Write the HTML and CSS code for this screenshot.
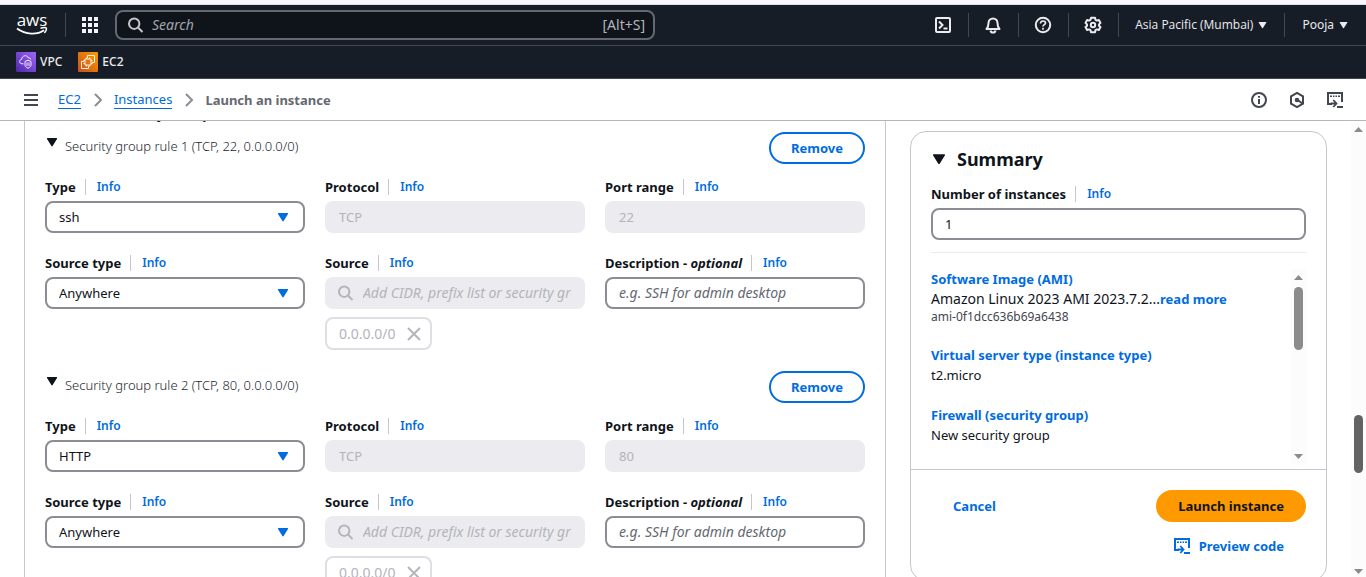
FILE: index.html
```html
<!DOCTYPE html>
<html lang="en">
<head>
<meta charset="utf-8">
<title>Launch an instance | EC2</title>
<link rel="stylesheet" href="styles.css">
</head>
<body>
<svg class="sprite" aria-hidden="true">
  <symbol id="i-search" viewBox="0 0 16 16"><circle cx="6.2" cy="6.7" r="5.2" fill="none" stroke="currentColor" stroke-width="2"/><path d="M10 10.500 14.500 15" stroke="currentColor" stroke-width="2"/></symbol>
  <symbol id="i-down" viewBox="0 0 12 10"><path d="M1.5 1h9q1 0 .5 1L6.6 9q-.6.8-1.2 0L1 2Q.5 1 1.500 1z" fill="currentColor"/></symbol>
  <symbol id="i-close" viewBox="0 0 16 16"><path d="M2 2l12 12M14 2 2 14" stroke="currentColor" stroke-width="2"/></symbol>
  <symbol id="i-chevron" viewBox="0 0 10 14"><path d="m2 1 6 6-6 6" fill="none" stroke="currentColor" stroke-width="2"/></symbol>
  <symbol id="i-code" viewBox="0 0 18 18"><path d="M6 13H2V2h14v9" fill="none" stroke="currentColor" stroke-width="2"/><path d="M4 4.500h2v1.500H4zM7 4.500h1.500v1.500H7zM9.500 4.500H11v1.500H9.500zM12 4.500h2v1.500h-2zM11 15h6v2h-6z" fill="currentColor"/><path d="M4.500 12.500h5.500M7.300 9l3.200 3.500L7.300 16" fill="none" stroke="currentColor" stroke-width="1.800"/></symbol>
  <symbol id="i-up" viewBox="0 0 9 5"><path d="M4.500 0 9 5H0z" fill="currentColor"/></symbol>
  <symbol id="i-dn" viewBox="0 0 9 5"><path d="M0 0h9L4.500 5z" fill="currentColor"/></symbol>
</svg>

<header class="topnav">
  <a class="logo" href="#" aria-label="AWS home">
    <svg width="32" height="32" viewBox="0 -5 32 32"><text class="logo-text" x="16" y="12" text-anchor="middle">aws</text><path d="M1 14.500c9 6.500 20 6.500 27 1.700" fill="none" stroke="#fff" stroke-width="1.900"/><path d="M24.500 14.300c3-.9 5-.9 5.700-.3.500.8-.2 3-1.800 5" fill="none" stroke="#fff" stroke-width="1.500"/></svg>
  </a>
  <button class="nav-btn apps" aria-label="Services">
    <svg width="18" height="18" viewBox="0 0 18 18" fill="#f3f3f7"><path d="M1 1h4v4H1zM7 1h4v4H7zM13 1h4v4h-4zM1 7h4v4H1zM7 7h4v4H7zM13 7h4v4h-4zM1 13h4v4H1zM7 13h4v4H7zM13 13h4v4h-4z"/></svg>
  </button>
  <label class="search">
    <svg width="16" height="16"><use href="#i-search"/></svg>
    <input type="search" placeholder="Search" aria-label="Search">
    <span>[Alt+S]</span>
  </label>
  <nav class="utilities">
    <button class="nav-btn" aria-label="CloudShell"><svg width="18" height="18" viewBox="0 0 18 18" fill="none" stroke="currentColor" stroke-width="2"><rect x="2" y="2" width="14" height="14" rx="1"/><path d="m5 5.500 3.500 3.500L5 12.500M9.500 12.500h4"/></svg></button>
    <button class="nav-btn" aria-label="Notifications"><svg width="18" height="18" viewBox="0 0 18 18" fill="none" stroke="currentColor" stroke-width="2"><path d="M2.500 13c2-2 2-3.500 2-6a4.500 4.500 0 0 1 9 0c0 2.500 0 4 2 6z" stroke-linejoin="round"/><path d="M6.500 14.500c.5 2.700 4.500 2.700 5 0"/></svg></button>
    <button class="nav-btn" aria-label="Support"><svg width="18" height="18" viewBox="0 0 18 18" fill="none" stroke="currentColor" stroke-width="2"><circle cx="9" cy="9" r="7.200"/><path d="M6.500 7.500c0-3.300 5-3.200 5-.5 0 1.800-2.500 1.500-2.500 3.500M9 11.700v2" stroke-width="1.700"/></svg></button>
    <button class="nav-btn" aria-label="Settings"><svg width="18" height="18" viewBox="0 0 18 18" fill="none" stroke="currentColor" stroke-width="2"><path d="M7 1.800h4l.5 2 1.400.8 2-.6 1.600 2.900-1.500 1.500v1.300l1.500 1.400-1.600 2.900-2-.6-1.400.8-.5 2H7l-.5-2-1.400-.8-2 .6-1.600-2.900L3 9.700V8.400L1.500 6.900 3.100 4l2 .6 1.400-.8z" stroke-linejoin="round"/><circle cx="9" cy="9" r="2.200"/></svg></button>
    <button class="nav-btn region">Asia Pacific (Mumbai)<svg width="9" height="8"><use href="#i-down"/></svg></button>
    <button class="nav-btn user">Pooja<svg width="9" height="8"><use href="#i-down"/></svg></button>
  </nav>
</header>

<nav class="favorites" aria-label="Favorites">
  <a href="#"><svg width="20" height="20" viewBox="0 0 20 20"><defs><linearGradient id="gv" x1="0" y1="1" x2="1" y2="0"><stop offset="0" stop-color="#4d27a8"/><stop offset="1" stop-color="#a166ff"/></linearGradient></defs><rect width="20" height="20" rx="1" fill="url(#gv)"/><path d="M7.500 11.800H6C3 11.500 2.800 8 5.600 7.400 5.700 3.500 11 2.300 12.300 5.800c1.800-.2 2.300.7 2.400 1.700M9 9.500l3-1.300 3 1.300v4c-.5 1.400-1.700 2.100-3 2.700-1.300-.6-2.500-1.300-3-2.700zM11 10.500v3.500M13 10.500v3.500" fill="none" stroke="#fff" stroke-width=".9"/></svg>VPC</a>
  <a href="#"><svg width="20" height="20" viewBox="0 0 20 20"><defs><linearGradient id="go" x1="0" y1="1" x2="1" y2="0"><stop offset="0" stop-color="#c8511b"/><stop offset="1" stop-color="#ff9900"/></linearGradient></defs><rect width="20" height="20" rx="1" fill="url(#go)"/><path d="M6 9.500H3.500v7h7V14M9.500 6V3.500h7v7H14M7 7h6v6H7zM8.500 5.500V7M11.500 5.500V7M8.500 13v1.500M11.500 13v1.500M5.500 8.500H7M5.500 11.500H7M13 8.500h1.500M13 11.500h1.500" fill="none" stroke="#fff" stroke-width=".9"/></svg>EC2</a>
</nav>

<div class="crumbbar">
  <button class="icon-btn" aria-label="Open navigation"><svg width="16" height="14" viewBox="0 0 16 14"><path d="M1 2h14M1 7h14M1 12h14" stroke="currentColor" stroke-width="2"/></svg></button>
  <nav class="crumbs" aria-label="Breadcrumbs">
    <a href="#">EC2</a><svg width="10" height="14"><use href="#i-chevron"/></svg><a href="#">Instances</a><svg width="10" height="14"><use href="#i-chevron"/></svg><span>Launch an instance</span>
  </nav>
  <div class="tools">
    <button class="icon-btn" aria-label="Info"><svg width="18" height="18" viewBox="0 0 18 18"><circle cx="9" cy="9" r="7" fill="none" stroke="currentColor" stroke-width="2"/><path d="M8 5h2v1.800H8zM8 8h2v5H8z" fill="currentColor"/></svg></button>
    <button class="icon-btn" aria-label="Diagnostics"><svg width="18" height="18" viewBox="0 0 18 18"><path d="m9 1.900 6 3.500v7.200l-6 3.500-6-3.500V5.400z" fill="none" stroke="currentColor" stroke-width="2"/><circle cx="9" cy="9" r="2.300" fill="currentColor"/><path d="m9.500 9 5 3.500" stroke="currentColor" stroke-width="2"/></svg></button>
    <button class="icon-btn" aria-label="Preview code"><svg width="18" height="18"><use href="#i-code"/></svg></button>
  </div>
</div>

<div class="viewport">
  <main class="content">
    <section class="panel">
      <h2 class="panel-title">Inbound Security Group Rules</h2>

      <section class="rule">
        <div class="rule-head">
          <button class="toggle"><svg width="12" height="10"><use href="#i-down"/></svg><span>Security group rule 1 (TCP, 22, 0.0.0.0/0)</span></button>
          <button class="btn">Remove</button>
        </div>
        <div class="fields">
          <div class="field"><div class="label"><label for="type1">Type</label><a href="#">Info</a></div>
            <div class="select"><select id="type1"><option>ssh</option></select><svg width="12" height="10"><use href="#i-down"/></svg></div></div>
          <div class="field"><div class="label"><label for="proto1">Protocol</label><a href="#">Info</a></div>
            <input class="input" id="proto1" value="TCP" disabled></div>
          <div class="field"><div class="label"><label for="port1">Port range</label><a href="#">Info</a></div>
            <input class="input" id="port1" value="22" disabled></div>
          <div class="field"><div class="label"><label for="stype1">Source type</label><a href="#">Info</a></div>
            <div class="select"><select id="stype1"><option>Anywhere</option></select><svg width="12" height="10"><use href="#i-down"/></svg></div></div>
          <div class="field"><div class="label"><label for="src1">Source</label><a href="#">Info</a></div>
            <div class="lookup"><svg width="16" height="16"><use href="#i-search"/></svg><input id="src1" placeholder="Add CIDR, prefix list or security group" disabled></div>
            <div class="token">0.0.0.0/0<button aria-label="Remove 0.0.0.0/0" disabled><svg width="16" height="16"><use href="#i-close"/></svg></button></div></div>
          <div class="field"><div class="label"><label for="desc1">Description - <i>optional</i></label><a href="#">Info</a></div>
            <input class="input" id="desc1" placeholder="e.g. SSH for admin desktop"></div>
        </div>
      </section>

      <section class="rule">
        <div class="rule-head">
          <button class="toggle"><svg width="12" height="10"><use href="#i-down"/></svg><span>Security group rule 2 (TCP, 80, 0.0.0.0/0)</span></button>
          <button class="btn">Remove</button>
        </div>
        <div class="fields">
          <div class="field"><div class="label"><label for="type2">Type</label><a href="#">Info</a></div>
            <div class="select"><select id="type2"><option>HTTP</option></select><svg width="12" height="10"><use href="#i-down"/></svg></div></div>
          <div class="field"><div class="label"><label for="proto2">Protocol</label><a href="#">Info</a></div>
            <input class="input" id="proto2" value="TCP" disabled></div>
          <div class="field"><div class="label"><label for="port2">Port range</label><a href="#">Info</a></div>
            <input class="input" id="port2" value="80" disabled></div>
          <div class="field"><div class="label"><label for="stype2">Source type</label><a href="#">Info</a></div>
            <div class="select"><select id="stype2"><option>Anywhere</option></select><svg width="12" height="10"><use href="#i-down"/></svg></div></div>
          <div class="field"><div class="label"><label for="src2">Source</label><a href="#">Info</a></div>
            <div class="lookup"><svg width="16" height="16"><use href="#i-search"/></svg><input id="src2" placeholder="Add CIDR, prefix list or security group" disabled></div>
            <div class="token">0.0.0.0/0<button aria-label="Remove 0.0.0.0/0" disabled><svg width="16" height="16"><use href="#i-close"/></svg></button></div></div>
          <div class="field"><div class="label"><label for="desc2">Description - <i>optional</i></label><a href="#">Info</a></div>
            <input class="input" id="desc2" placeholder="e.g. SSH for admin desktop"></div>
        </div>
      </section>
    </section>

    <aside class="summary">
      <div class="summary-body">
        <h2><button class="summary-toggle"><svg width="14" height="12" viewBox="0 0 12 10"><use href="#i-down"/></svg>Summary</button></h2>
        <div class="field"><div class="label"><label for="count">Number of instances</label><a href="#">Info</a></div>
          <input class="input" id="count" value="1"></div>
        <div class="details">
          <div class="detail-list">
            <div><a href="#">Software Image (AMI)</a><p><span class="ami-name">Amazon Linux 2023 AMI 2023.7.2...</span><a href="#">read more</a></p><small>ami-0f1dcc636b69a6438</small></div>
            <div><a href="#">Virtual server type (instance type)</a><p>t2.micro</p></div>
            <div><a href="#">Firewall (security group)</a><p>New security group</p></div>
          </div>
          <div class="scrollbar inner"><svg width="9" height="5"><use href="#i-up"/></svg><span class="thumb"></span><svg class="end" width="9" height="5"><use href="#i-dn"/></svg></div>
        </div>
      </div>
      <div class="summary-actions">
        <div class="main-actions"><button class="link-btn">Cancel</button><button class="btn primary">Launch instance</button></div>
        <button class="link-btn preview"><svg width="18" height="18"><use href="#i-code"/></svg>Preview code</button>
      </div>
    </aside>
  </main>
  <div class="scrollbar outer"><svg width="9" height="5"><use href="#i-up"/></svg><span class="thumb"></span><svg class="end" width="9" height="5"><use href="#i-dn"/></svg></div>
</div>
</body>
</html>
```
FILE: styles.css
```css
* { box-sizing: border-box; }
body {
  margin: 0;
  height: 100vh;
  overflow: hidden;
  display: flex;
  flex-direction: column;
  border-top: 4px solid #faf8ff;
  background: #fff;
  color: #0f141a;
  font: 14px/20px "Noto Sans", "Open Sans", sans-serif;
}
button, input, select { font: inherit; color: inherit; }
button { background: none; border: 0; padding: 0; cursor: pointer; }
a { color: #006ce0; text-decoration: none; }
h2, p { margin: 0; }
svg { display: block; flex: none; }
.sprite { position: absolute; width: 0; height: 0; }

.topnav {
  display: flex;
  align-items: center;
  flex: none;
  height: 42px;
  padding-left: 16px;
  border-top: 1px solid #dedee3;
  border-bottom: 1px solid #424650;
  background: #161d26;
  color: #ebebf0;
  font-size: 12px;
}
.logo { display: flex; align-items: center; height: 24px; padding-right: 17px; border-right: 1px solid #424650; }
.logo-text { fill: #fff; font: 500 17px "Open Sans", sans-serif; }
.apps { margin: 0 16px 0 15px; }
.search {
  display: flex;
  align-items: center;
  gap: 8px;
  width: 540px;
  height: 30px;
  padding: 0 8px 0 11px;
  border: 2px solid #656871;
  border-radius: 8px;
  background: #0f141a;
  color: #b4b4bb;
  font-size: 14px;
}
.search svg { color: #c6c6cd; }
.search input {
  flex: 1;
  min-width: 0;
  border: 0;
  padding: 0;
  outline: 0;
  background: none;
  font-style: italic;
}
.search input::placeholder { color: #a4a4ad; }
.utilities { display: flex; align-items: center; margin-left: auto; }
.utilities .nav-btn {
  display: flex;
  align-items: center;
  gap: 5px;
  height: 24px;
  padding: 0 16px 0 15px;
}
.utilities .nav-btn + .nav-btn { border-left: 1px solid #424650; }
.utilities .nav-btn.region { padding: 0 17px 0 16px; font-family: "Open Sans", sans-serif; font-weight: 500; }
.utilities .nav-btn.user { padding: 0 18px 0 17px; }

.favorites {
  display: flex;
  align-items: center;
  gap: 16px;
  flex: none;
  height: 33px;
  padding-left: 16px;
  border-bottom: 1px solid #424650;
  background: #161d26;
  font-size: 12px;
  font-weight: 500;
}
.favorites a { display: flex; align-items: center; gap: 4px; color: #ebebf0; }

.crumbbar {
  display: flex;
  align-items: center;
  flex: none;
  height: 42px;
  padding: 0 22px 0 23px;
  border-bottom: 1px solid #b4b4bb;
  color: #424650;
}
.crumbs { display: flex; align-items: center; gap: 11px; margin-left: 19px; font-size: 13px; }
.crumbs a { line-height: 18px; border-bottom: 1px solid #006ce0; }
.crumbs svg { margin-left: 1px; color: #8c8c94; }
.crumbs span { color: #656871; font-weight: 700; }
.tools { display: flex; gap: 20px; margin-left: auto; }

.viewport { display: flex; flex: 1; min-height: 0; overflow: hidden; }
.content {
  display: grid;
  grid-template-columns: minmax(0, 862fr) minmax(0, 417fr);
  align-items: start;
  gap: 24px;
  flex: 1;
  padding: 0 24px;
}
.panel {
  padding: 0 20px;
  border: 1px solid #c6c6cd;
  border-width: 0 1px;
}
.panel-title { margin-top: -17px; line-height: 20px; font-size: 14px; font-weight: 700; }
.rule { padding: 8px 0 13px; }
.rule-head { display: flex; justify-content: space-between; align-items: flex-start; }
.toggle { display: flex; gap: 7px; padding: 5px 0 0 1px; font-size: 13px; font-weight: 300; color: #23272f; }
.toggle svg { color: #0f141a; }
.toggle span { line-height: 18px; }
.btn {
  height: 32px;
  padding: 0 20px;
  border: 2px solid #006ce0;
  border-radius: 16px;
  background: #fff;
  color: #006ce0;
  font-size: 13px;
  font-weight: 700;
}
.fields { display: grid; grid-template-columns: repeat(3, minmax(0, 1fr)); gap: 20px; margin-top: 13px; }
.label { display: flex; align-items: center; margin-bottom: 4px; font-size: 13px; font-weight: 700; }
.label a {
  margin-left: 9px;
  padding-left: 11px;
  border-left: 1px solid #c6c6cd;
  font-size: 12px;
  line-height: 16px;
  font-weight: 600;
}
.input, .select select {
  display: block;
  width: 100%;
  height: 32px;
  padding: 0 12px;
  border: 2px solid #8c8c94;
  border-radius: 8px;
  outline: 0;
  background: #fff;
  font-size: 13px;
}
.input::placeholder { color: #656871; font-size: 14px; font-style: italic; opacity: 1; }
.input:disabled { border-color: #ebebf0; background: #ebebf0; color: #b4b4bb; }
.select { display: grid; align-items: center; }
.select select { grid-area: 1 / 1; appearance: none; }
.select svg { grid-area: 1 / 1; justify-self: end; margin-right: 16px; color: #006ce0; pointer-events: none; }
.lookup {
  display: flex;
  align-items: center;
  gap: 9px;
  height: 32px;
  padding: 0 14px 0 13px;
  border-radius: 8px;
  background: #ebebf0;
  color: #b4b4bb;
}
.lookup input { flex: 1; min-width: 0; padding: 0; border: 0; background: none; font-size: 14px; }
.lookup input::placeholder { color: #b4b4bb; font-style: italic; opacity: 1; }
.token {
  display: flex;
  align-items: center;
  gap: 10px;
  width: max-content;
  height: 33px;
  margin-top: 8px;
  padding: 0 8px 0 12px;
  border: 2px solid #dedee3;
  border-radius: 8px;
  color: #b4b4bb;
}

.summary { margin-top: 10px; border: 1px solid #c6c6cd; border-radius: 16px; }
.summary-body { padding: 15px 20px 4px; }
.summary h2 { margin-bottom: 13px; }
.summary-toggle { display: flex; align-items: center; gap: 11px; padding-left: 1px; font-size: 18px; line-height: 24px; font-weight: 700; }
.details {
  display: flex;
  justify-content: space-between;
  margin-top: 12px;
  padding-top: 16px;
  border-top: 1px solid #ebebf0;
}
.detail-list { display: flex; flex-direction: column; gap: 20px; padding-bottom: 20px; font-size: 13px; }
.detail-list a { font-weight: 700; }
.ami-name { font-size: 14px; }
.detail-list small { display: block; font-size: 12px; line-height: 16px; color: #424650; }
.summary-actions { padding: 20px; border-top: 1px solid #c6c6cd; }
.main-actions { display: flex; justify-content: space-between; align-items: center; }
.link-btn { padding: 0 22px; color: #006ce0; font-size: 13px; font-weight: 700; }
.primary { border-color: #ff9900; background: #ff9900; color: #0f141a; }
.preview { display: flex; align-items: center; gap: 8px; margin: 14px 0 4px auto; }

.scrollbar {
  display: flex;
  flex-direction: column;
  align-items: center;
  width: 15px;
  background: #fcfcfc;
  color: #8b8b8b;
}
.thumb { width: 9px; border-radius: 5px; background: #8b8b8b; }
.scrollbar .end { margin-top: auto; }
.inner { padding: 6px 0; }
.inner .thumb { height: 63px; margin-top: 7px; }
.outer { padding: 6px 0 3px; }
.outer .thumb { height: 58px; margin-top: 283px; background: #636363; }
```
